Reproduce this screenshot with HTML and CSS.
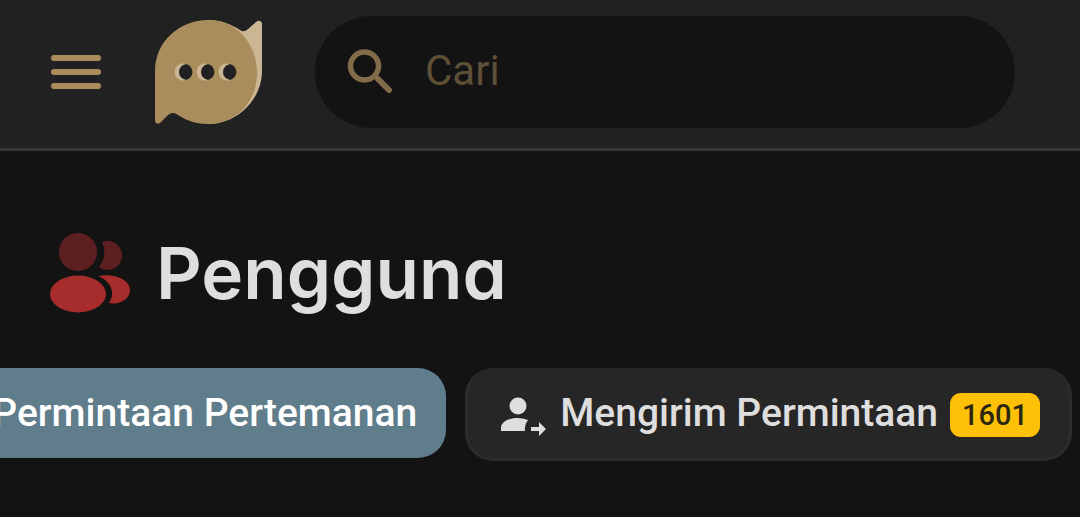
FILE: index.html
```
<!DOCTYPE html>
<html lang="id">
<head>
    <meta charset="UTF-8">
    <meta name="viewport" content="width=device-width, initial-scale=1.0">
    <title>Pengguna</title>
    <link rel="stylesheet" href="styles.css">
</head>
<body>
    <header class="navbar">
        <button class="menu-button" type="button" aria-label="Menu">
            <svg width="52" height="36" viewBox="0 0 52 36" fill="none" stroke="currentColor" stroke-width="6" stroke-linecap="round">
                <path d="M4 4H48M4 18H48M4 32H48"/>
            </svg>
        </button>
        <a class="logo" href="#" aria-label="Beranda">
            <svg width="108" height="106" viewBox="0 0 108 106">
                <path fill="#cbb694" d="M54 1C66 1 77 5 86 11Q90 14 94 10L102 3Q106 0 108 4V52C108 80 84 105 54 105Z"/>
                <path fill="#aa8d5d" d="M54 1C83 1 103 25 103 54C103 83 82 105 54 105C43 105 33 102 24 96Q19 92 14 96L6 104Q2 106 1 102V52C1 23 25 1 54 1Z"/>
                <g fill="#cbb694">
                    <path d="M32 45A8.500 8.500 0 1 0 32 61Z"/>
                    <path d="M54 45A8.500 8.500 0 1 0 54 61Z"/>
                    <path d="M76 45A8.500 8.500 0 1 0 76 61Z"/>
                </g>
                <g fill="#212121">
                    <path d="M32 45Q38 47 38.500 53Q38 59 32 61Q25 59 25 53T32 45Z"/>
                    <path d="M54 45Q60 47 60.500 53Q60 59 54 61Q47 59 47 53T54 45Z"/>
                    <path d="M76 45Q82 47 82.500 53Q82 59 76 61Q69 59 69 53T76 45Z"/>
                </g>
            </svg>
        </a>
        <form class="search" role="search">
            <label class="search-icon" for="search-input" aria-label="Cari">
                <svg width="46" height="46" viewBox="0 0 46 46" fill="none" stroke="currentColor">
                    <circle cx="17.500" cy="18" r="14" stroke-width="5.500"/>
                    <path d="M27 27L31 31" stroke-width="4"/>
                    <path d="M31 31L42 42" stroke-width="6" stroke-linecap="round"/>
                </svg>
            </label>
            <input class="search-input" id="search-input" type="text" placeholder="Cari">
        </form>
    </header>

    <main>
        <div class="page-title">
            <svg width="80" height="80" viewBox="0 0 80 80">
                <g fill="#5e1f20">
                    <circle cx="28" cy="19" r="19"/>
                    <path d="M52 9A14.500 14.500 0 1 1 49 34Q58 22 52 9Z"/>
                </g>
                <g fill="#a72c2c">
                    <ellipse cx="28" cy="61" rx="28" ry="18.500"/>
                    <path d="M48 43C65 40 80 47 80 57C80 66 70 72 59 70C66 60 61 48 48 43Z"/>
                </g>
            </svg>
            <h1>Pengguna</h1>
        </div>

        <nav class="tabs">
            <button class="tab tab-active" type="button">Permintaan Pertemanan</button>
            <button class="tab" type="button">
                <svg class="tab-icon" width="46" height="40" viewBox="0 0 46 40" fill="currentColor">
                    <circle cx="18" cy="11" r="8.500"/>
                    <path d="M1 36V33C1 26 10 23 17 23Q23 23 28 25Q24 30 25 36Z"/>
                    <path d="M31 32H39V27L46 34L39 41V36H31Z"/>
                </svg>
                Mengirim Permintaan
                <span class="badge">1601</span>
            </button>
        </nav>
    </main>
</body>
</html>
```
FILE: styles.css
```
* {
    box-sizing: border-box;
}

body {
    margin: 0;
    font-family: Roboto, "Liberation Sans", sans-serif;
    background-color: #131313;
    color: #dedede;
    overflow-x: hidden;
}

button {
    font: inherit;
    border: none;
    cursor: pointer;
}

svg {
    display: block;
    flex: none;
    overflow: visible;
}

/* Top bar */
.navbar {
    display: flex;
    align-items: center;
    padding: 16px 65px 20px 50px;
    background-color: #212121;
    border-bottom: 3px solid #373737;
}

.menu-button {
    padding: 0;
    margin-right: 52px;
    background: none;
    color: #aa8d5d;
}

.logo {
    margin-right: 53px;
}

.search {
    flex: 1;
    display: flex;
    align-items: center;
    gap: 32px;
    height: 112px;
    padding: 0 32px 3px;
    background-color: #131313;
    border-radius: 56px;
}

.search-icon {
    color: #826b48;
}

.search-input {
    flex: 1;
    min-width: 0;
    padding: 0;
    border: none;
    outline: none;
    background: none;
    color: #aa8d5d;
    font-family: inherit;
    font-size: 42px;
}

.search-input::placeholder {
    color: #5e4f37;
    opacity: 1;
}

/* Page title */
.page-title {
    display: flex;
    align-items: center;
    gap: 26px;
    padding: 77px 50px 50px;
}

.page-title h1 {
    margin: 0;
    font-family: Inter, "Open Sans", sans-serif;
    font-size: 71px;
    font-weight: 600;
    line-height: 90px;
    font-feature-settings: "cv11";
}

/* Tabs, scrolled to the last one */
.tabs {
    display: flex;
    justify-content: flex-end;
    align-items: flex-start;
    gap: 19px;
    padding-right: 8px;
    overflow: hidden;
}

.tab {
    display: flex;
    flex: none;
    align-items: center;
    height: 93px;
    padding: 0 29px 0 32px;
    background-color: #262626;
    border: 3px solid #2c2c2c;
    border-top: none;
    border-radius: 28px;
    color: #dedede;
    font-size: 39px;
    font-weight: 500;
    white-space: nowrap;
}

.tab-active {
    height: 90px;
    padding: 0 29px;
    background-color: #607d8b;
    border: none;
    color: #ffffff;
}

.tab-icon {
    margin-top: 4px;
    margin-right: 14px;
}

.badge {
    margin-top: 4px;
    margin-left: 12px;
    padding: 0 12px;
    border-radius: 11px;
    background-color: #ffc107;
    color: #2c260f;
    font-size: 29px;
    line-height: 44px;
}
```
